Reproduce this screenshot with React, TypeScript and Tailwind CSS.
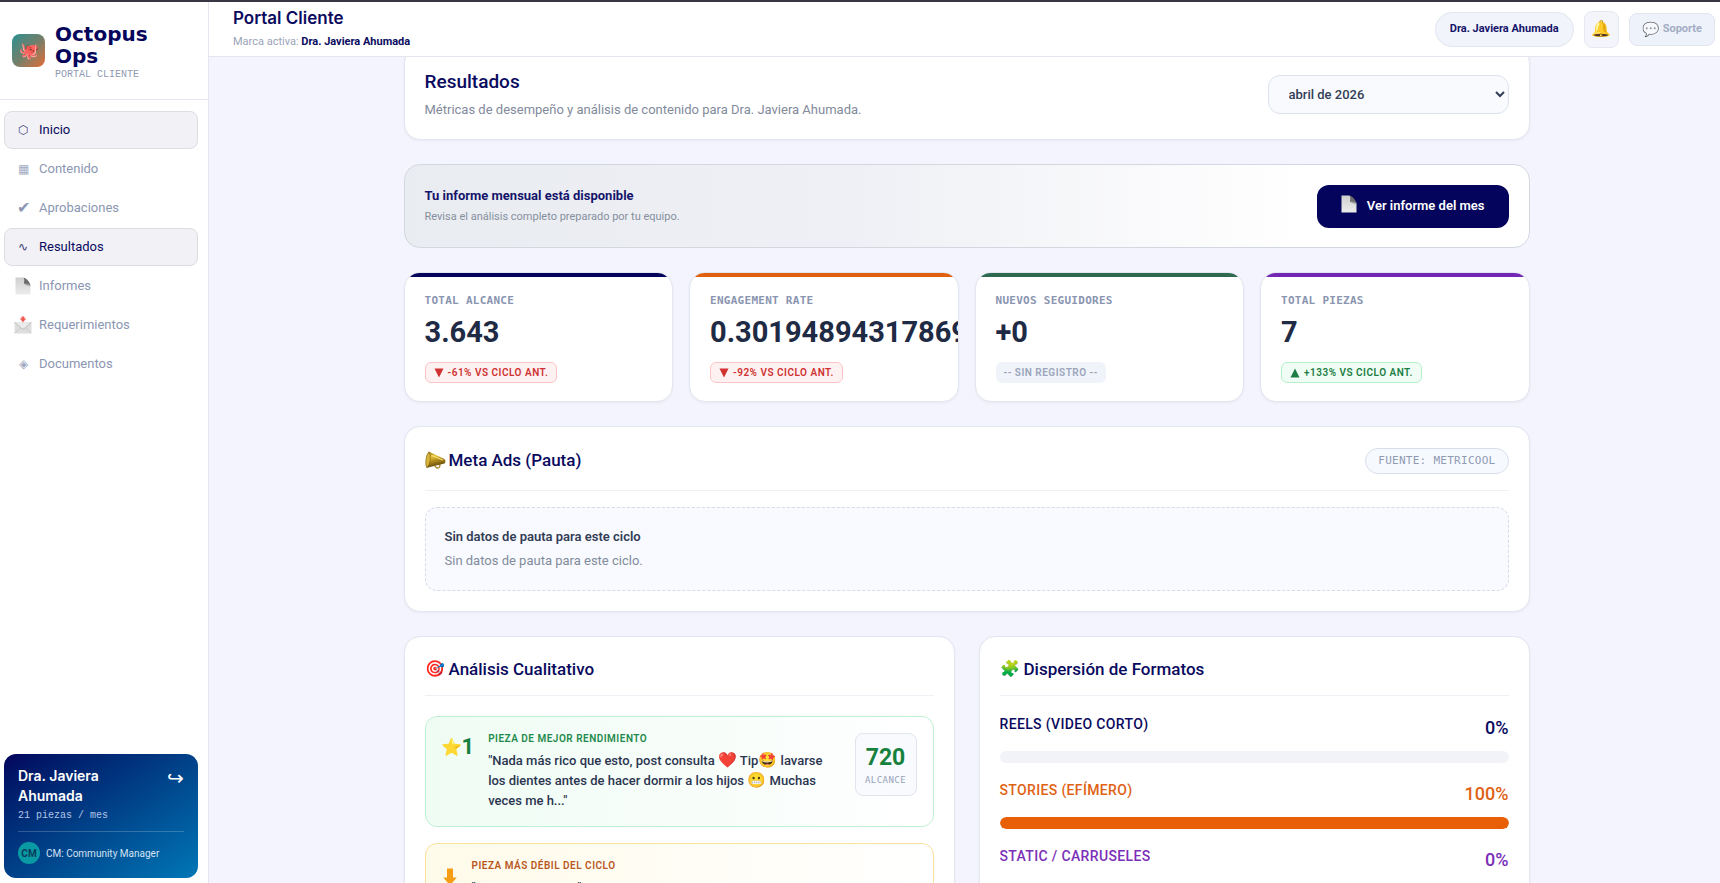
import React from "react";

const MONO = "font-['DejaVu_Sans_Mono','Liberation_Mono',monospace]";

function PageIcon({ className }: { className: string }) {
  return (
    <svg viewBox="0 0 16 18" className={className} aria-hidden="true">
      <defs>
        <linearGradient id="page-fill" x1="0" y1="0" x2="0" y2="1">
          <stop offset="0" stopColor="#cfcfcf" />
          <stop offset="1" stopColor="#ececec" />
        </linearGradient>
      </defs>
      <path d="M0.5 0.5H8.5L15.5 8V17.5H0.5Z" fill="url(#page-fill)" />
      <path d="M8.5 0.5C9.6 2 9.4 4.500 8.800 6.800C11 6.700 14 6.800 15.500 8.600C15 5 11.500 1.200 8.500 0.500Z" fill="#6b6b6b" />
      <path d="M8.800 6.800C11 6.500 14.500 7 15.500 9.400C13 8.200 10.500 8.200 8.800 6.800Z" fill="#9a9a9a" />
    </svg>
  );
}

function MailIcon({ className }: { className: string }) {
  return (
    <svg viewBox="0 0 18 18" className={className} aria-hidden="true">
      <rect x="0.500" y="6" width="17" height="11.500" rx="0.600" fill="#dedede" />
      <path d="M0.800 17.200L6.800 11.400M17.200 17.200L11.200 11.400" stroke="#c2c2c2" strokeWidth="0.700" />
      <path d="M0.600 6.300L7.800 12.800Q9 13.700 10.200 12.800L17.400 6.300" fill="#eaeaea" stroke="#b4b4b4" strokeWidth="0.800" />
      <path d="M7.600 0.500H10.400V2.500H12.300L9 6.300L5.700 2.500H7.600Z" fill="#ef5b52" />
    </svg>
  );
}

function MegaphoneIcon({ className }: { className: string }) {
  return (
    <svg viewBox="0 0 21 18" className={className} aria-hidden="true">
      <defs>
        <linearGradient id="horn-fill" x1="0" y1="0" x2="0.300" y2="1">
          <stop offset="0" stopColor="#8a6a12" />
          <stop offset="0.350" stopColor="#e9c53a" />
          <stop offset="0.600" stopColor="#b8901d" />
          <stop offset="1" stopColor="#5f4708" />
        </linearGradient>
      </defs>
      <path d="M9.500 14.500Q11.500 18 14 16.500Q15.300 15.500 14.600 13" fill="none" stroke="#a8862a" strokeWidth="1.400" />
      <path d="M4 0.800L19 7.800Q20.800 8.800 20.400 11Q20 12.600 18.600 12.700L2 16.800Q0.500 14 1 9Q1.800 3.500 4 0.800Z" fill="url(#horn-fill)" />
      <path d="M4 0.800Q6 3.500 5.200 9Q4.500 14 2 16.800Q0.300 14.500 0.800 9.500Q1.500 3 4 0.800Z" fill="#d9b43a" stroke="#7a5c10" strokeWidth="0.600" />
      <path d="M6.800 4.500L17.500 9" stroke="#fbe58a" strokeWidth="1" strokeLinecap="round" />
    </svg>
  );
}

const nav = [
  { label: "Inicio", icon: "⬡", active: true },
  { label: "Contenido", icon: "▦", active: false },
  { label: "Aprobaciones", icon: "✔", active: false },
  { label: "Resultados", icon: "∿", active: true },
  { label: "Informes", icon: "page", active: false },
  { label: "Requerimientos", icon: "mail", active: false },
  { label: "Documentos", icon: "◈", active: false },
];

function NavIcon({ icon }: { icon: string }) {
  if (icon === "page") return <PageIcon className="h-[18px] w-4 shrink-0" />;
  if (icon === "mail") return <MailIcon className="h-[18px] w-[18px] shrink-0" />;
  return <span className={icon === "✔" ? "text-base" : "text-xs opacity-80"}>{icon}</span>;
}

function Sidebar() {
  return (
    <aside className="flex w-[209px] shrink-0 flex-col border-r border-[#e3e6ee] bg-white">
      <div className="flex h-[98px] items-center gap-2.5 border-b border-[#e3e6ee] px-3">
        <div className="flex size-[33px] shrink-0 items-center justify-center rounded-lg bg-linear-to-br from-[#12908f] via-[#6f7f6b] to-[#e0662c] text-base">
          🐙
        </div>
        <div className="pt-1">
          <div className="font-['DejaVu_Sans','Inter',sans-serif] text-xl leading-[22px] font-bold text-[#05055c]">
            Octopus
            <br />
            Ops
          </div>
          <div className="font-['Liberation_Mono',monospace] text-[10px] leading-4 text-[#8f9ab3]">PORTAL CLIENTE</div>
        </div>
      </div>
      <nav className="flex flex-col gap-px pt-[11px] pr-2.5 pl-1">
        {nav.map((n) => (
          <a
            key={n.label}
            href="#"
            className={
              n.active
                ? "flex h-[38px] items-center gap-2 rounded-lg border border-[#dcdde3] bg-[#f1f1f6] pl-2.5 text-[13px] text-[#0a0a5e]"
                : "flex h-[38px] items-center gap-2 rounded-lg border border-transparent pl-2.5 text-[13px] text-[#8b96b2]"
            }
          >
            <span className="flex w-4 items-center justify-center">
              <NavIcon icon={n.icon} />
            </span>
            {n.label}
          </a>
        ))}
      </nav>
      <div className="mt-auto pr-2.5 pb-[5px] pl-1">
        <div className="rounded-xl bg-linear-to-br from-[#04045c] to-[#0077b6] p-3.5 pt-3 text-white">
          <div className="flex items-start justify-between">
            <div className="font-['Inter',sans-serif] text-sm leading-5 font-semibold">
              Dra. Javiera
              <br />
              Ahumada
            </div>
            <button aria-label="Cerrar sesión" className="text-xl leading-6">
              ↪
            </button>
          </div>
          <div className="pt-px font-['Liberation_Mono',monospace] text-[10px] leading-[18px] text-[#b4c5e6]">21 piezas / mes</div>
          <div className="mt-1.5 flex items-center gap-1.5 border-t border-white/20 pt-2.5">
            <span className="flex size-[22px] items-center justify-center rounded-full bg-[#0a9aa4] text-[10px] font-bold text-[#083a5c]">
              CM
            </span>
            <span className="text-[10px] text-[#d5e1f2]">CM: Community Manager</span>
          </div>
        </div>
      </div>
    </aside>
  );
}

function Header() {
  return (
    <header className="flex h-[55px] shrink-0 items-center justify-between border-b border-[#e3e6ee] bg-white pr-[5px] pl-6">
      <div>
        <h1 className="font-['Inter',sans-serif] text-[17px] leading-6 font-semibold text-[#0a0a5e]">Portal Cliente</h1>
        <p className="pt-0.5 text-[11px] leading-5 text-[#9aa4b8]">
          Marca activa: <strong className="font-bold text-[#0a0a5e]">Dra. Javiera Ahumada</strong>
        </p>
      </div>
      <div className="flex items-center gap-2.5">
        <span className="flex h-[35px] items-center rounded-full border border-[#e1e5f0] bg-[#f2f4fc] px-3.5 text-[11px] font-bold text-[#14146a]">
          Dra. Javiera Ahumada
        </span>
        <button
          aria-label="Notificaciones"
          className="flex h-[37px] w-[35px] items-center justify-center rounded-lg border border-[#e6e9f2] bg-[#f3f5fb] text-base"
        >
          🔔
        </button>
        <button className="flex h-[33px] items-center gap-1 rounded-lg border border-[#e1e5f0] bg-[#eef2fb] px-3 text-[11px] font-bold text-[#a3adc4]">
          <span className="text-sm opacity-60">💬</span>
          Soporte
        </button>
      </div>
    </header>
  );
}

const kpis = [
  { label: "TOTAL ALCANCE", value: "3.643", bar: "bg-[#04045c]", trend: "down", note: "-61% VS CICLO ANT." },
  { label: "ENGAGEMENT RATE", value: "0.30194894317869", bar: "bg-[#e06010]", trend: "down", note: "-92% VS CICLO ANT." },
  { label: "NUEVOS SEGUIDORES", value: "+0", bar: "bg-[#2d6a4f]", trend: "none", note: "-- SIN REGISTRO --" },
  { label: "TOTAL PIEZAS", value: "7", bar: "bg-[#7427b4]", trend: "up", note: "+133% VS CICLO ANT." },
];

function Badge({ trend, note }: { trend: string; note: string }) {
  if (trend === "none")
    return (
      <span className="flex h-[21px] items-center rounded-md bg-[#f0f3f9] px-2 text-[10px] font-semibold tracking-wider text-[#9aa5bb]">
        {note}
      </span>
    );
  return (
    <span
      className={
        trend === "down"
          ? "flex h-[21px] items-center gap-1 rounded-md border border-[#fbc4c6] bg-[#fef1f1] px-2 text-[10px] font-semibold tracking-wider text-[#cf3230]"
          : "flex h-[21px] items-center gap-1 rounded-md border border-[#b5f0cb] bg-[#effdf4] px-2 text-[10px] font-semibold tracking-wider text-[#1c7d45]"
      }
    >
      <svg viewBox="0 0 10 10" className="size-[10px]" aria-hidden="true">
        <path d={trend === "down" ? "M0.500 0.500H9.500L5 9.500Z" : "M0.500 9.500H9.500L5 0.500Z"} fill="currentColor" />
      </svg>
      {note}
    </span>
  );
}

const card = "rounded-2xl border border-[#e2e6f0] bg-white shadow-[0_1px_3px_rgba(15,23,42,0.05)]";

const formats = [
  { label: "REELS (VIDEO CORTO)", value: 0, color: "text-[#0a0a5e]" },
  { label: "STORIES (EFÍMERO)", value: 100, color: "text-[#df6214]" },
  { label: "STATIC / CARRUSELES", value: 0, color: "text-[#7b2fb8]" },
];

export default function App() {
  return (
    <div className="flex h-screen overflow-hidden border-t-2 border-[#3a3542] bg-[#f3f4fd] font-['Roboto','Liberation_Sans',sans-serif]">
      <Sidebar />
      <div className="flex min-w-0 flex-1 flex-col">
        <Header />
        <main className="min-h-0 flex-1 overflow-hidden pr-4 pl-5">
          <div className="mx-auto -mt-2.5 flex max-w-[1126px] flex-col gap-6">
            <section className={`${card} flex items-center justify-between px-5 pt-5 pb-[19px]`}>
              <div>
                <h2 className="text-[19px] leading-7 font-medium text-[#0a0a5e]">Resultados</h2>
                <p className="pt-1 text-[13px] leading-5 text-[#828b9b]">
                  Métricas de desempeño y análisis de contenido para Dra. Javiera Ahumada.
                </p>
              </div>
              <select
                aria-label="Mes"
                className="h-[39px] w-[241px] rounded-xl border border-[#dde3ee] bg-[#f8fafe] pl-4 text-[13px] font-medium text-[#333d55]"
              >
                <option>abril de 2026</option>
              </select>
            </section>

            <section className="flex h-[84px] items-center justify-between rounded-2xl border border-[#d3d8e0] bg-linear-to-r from-[#e9ecf0] via-[#eff0f5] via-40% to-white to-80% px-5">
              <div>
                <h3 className="text-[13px] leading-5 font-bold text-[#14146a]">Tu informe mensual está disponible</h3>
                <p className="pt-px text-[11px] leading-5 text-[#868f9f]">Revisa el análisis completo preparado por tu equipo.</p>
              </div>
              <button className="flex h-[43px] items-center gap-2.5 rounded-xl bg-[#04045c] px-6 text-[13px] font-semibold text-white">
                <PageIcon className="mb-1 h-[18px] w-4" />
                Ver informe del mes
              </button>
            </section>

            <section className="grid grid-cols-4 gap-4">
              {kpis.map((k) => (
                <article key={k.label} className={`${card} h-[130px] overflow-hidden`}>
                  <div className={`h-1 ${k.bar}`} />
                  <div className="px-5 pt-4">
                    <h3 className={`${MONO} text-[11px] leading-4 font-bold tracking-wide text-[#8a95b0]`}>{k.label}</h3>
                    <p className="pt-[5px] text-[29px] leading-9 font-bold whitespace-nowrap text-[#1f2a44]">{k.value}</p>
                    <div className="flex pt-3">
                      <Badge trend={k.trend} note={k.note} />
                    </div>
                  </div>
                </article>
              ))}
            </section>

            <section className={`${card} px-5 pt-[21px] pb-5`}>
              <div className="flex items-start justify-between border-b border-[#edf0f5] pb-4">
                <h2 className="flex items-center gap-[3px] text-[17px] leading-6 font-medium text-[#0a0a5e]">
                  <MegaphoneIcon className="h-[18px] w-[21px]" />
                  Meta Ads (Pauta)
                </h2>
                <span className={`${MONO} flex h-[26px] items-center rounded-full border border-[#d9dfea] bg-[#f6f9fe] px-3 text-[11px] tracking-wide text-[#8f9ab3]`}>
                  FUENTE: METRICOOL
                </span>
              </div>
              <div className="mt-4 rounded-xl border border-dashed border-[#d5dce6] bg-[#f8faff] p-[19px]">
                <h3 className="text-[13px] leading-5 font-semibold text-[#333d55]">Sin datos de pauta para este ciclo</h3>
                <p className="pt-1 text-[13px] leading-5 text-[#828b9b]">Sin datos de pauta para este ciclo.</p>
              </div>
            </section>

            <section className="grid grid-cols-2 items-start gap-6">
              <article className={`${card} px-5 pt-[19px] pb-5`}>
                <h2 className="flex items-center gap-[3px] border-b border-[#edf0f5] pb-[13px] text-[17px] leading-[26px] font-medium text-[#0a0a5e]">
                  <span className="w-[21px] text-base">🎯</span>
                  Análisis Cualitativo
                </h2>
                <div className="mt-5 flex flex-col gap-4">
                  <div className="flex items-start gap-3.5 rounded-xl border border-[#c0f0d2] bg-linear-to-r from-[#effcf4] to-white p-4 pb-[15px] pl-[15px]">
                    <div className="flex items-center text-[22px] leading-7 font-bold text-[#17803d]">
                      <span className="text-[17px]">⭐</span>1
                    </div>
                    <div className="min-w-0 flex-1">
                      <h3 className="text-[10px] leading-3 font-semibold tracking-wider text-[#1f8a4c]">PIEZA DE MEJOR RENDIMIENTO</h3>
                      <p className="pt-1.5 text-[13px] leading-5 font-medium text-[#2b3550]">
                        "Nada más rico que esto, post consulta <span className="text-[15px] leading-none">❤️</span> Tip
                        <span className="text-[15px] leading-none">🤩</span> lavarse los dientes antes de hacer dormir a los hijos{" "}
                        <span className="text-[15px] leading-none">😬</span> Muchas veces me h..."
                      </p>
                    </div>
                    <div className="ml-0.5 flex h-[63px] w-[62px] shrink-0 flex-col items-center rounded-lg border border-[#dfe4ee] bg-[#f8fafe] pt-2">
                      <strong className="text-[23px] leading-8 font-bold text-[#17803d]">720</strong>
                      <span className={`${MONO} text-[9px] leading-3 tracking-wider text-[#97a2b8]`}>ALCANCE</span>
                    </div>
                  </div>
                  <div className="flex items-start gap-3.5 rounded-xl border border-[#fbe19a] bg-linear-to-r from-[#fffbea] to-white p-4 pb-6">
                    <div className="flex w-4 justify-center pt-2">
                      <svg viewBox="0 0 14 18" className="h-[18px] w-3.5" aria-hidden="true">
                        <path d="M4 0.500H10V9.500H13.800L7 17.500L0.200 9.500H4Z" fill="#f59e15" />
                      </svg>
                    </div>
                    <div className="min-w-0 flex-1">
                      <h3 className="text-[10px] leading-3 font-semibold tracking-wider text-[#b8581f]">PIEZA MÁS DÉBIL DEL CICLO</h3>
                      <p className="pt-1.5 text-[13px] leading-5 font-medium text-[#2b3550]">"Story 27-04-2026"</p>
                    </div>
                  </div>
                </div>
              </article>

              <article className={`${card} px-5 pt-[19px] pb-5`}>
                <h2 className="flex items-center gap-[3px] border-b border-[#edf0f5] pb-[13px] text-[17px] leading-[26px] font-medium text-[#0a0a5e]">
                  <span className="w-[21px] text-base">🧩</span>
                  Dispersión de Formatos
                </h2>
                <div className="mt-[18px] flex flex-col gap-[17px]">
                  {formats.map((f) => (
                    <div key={f.label} className={f.color}>
                      <div className="flex justify-between">
                        <span className="text-sm leading-5 font-medium tracking-wide">{f.label}</span>
                        <span className="pt-0.5 text-lg leading-6 font-medium">{f.value}%</span>
                      </div>
                      <div className="mt-[11px] h-3 overflow-hidden rounded-full bg-[#f1f3f8]">
                        <div className="h-full rounded-full bg-[#e85f08]" style={{ width: `${f.value}%` }} />
                      </div>
                    </div>
                  ))}
                </div>
              </article>
            </section>
          </div>
        </main>
      </div>
    </div>
  );
}
